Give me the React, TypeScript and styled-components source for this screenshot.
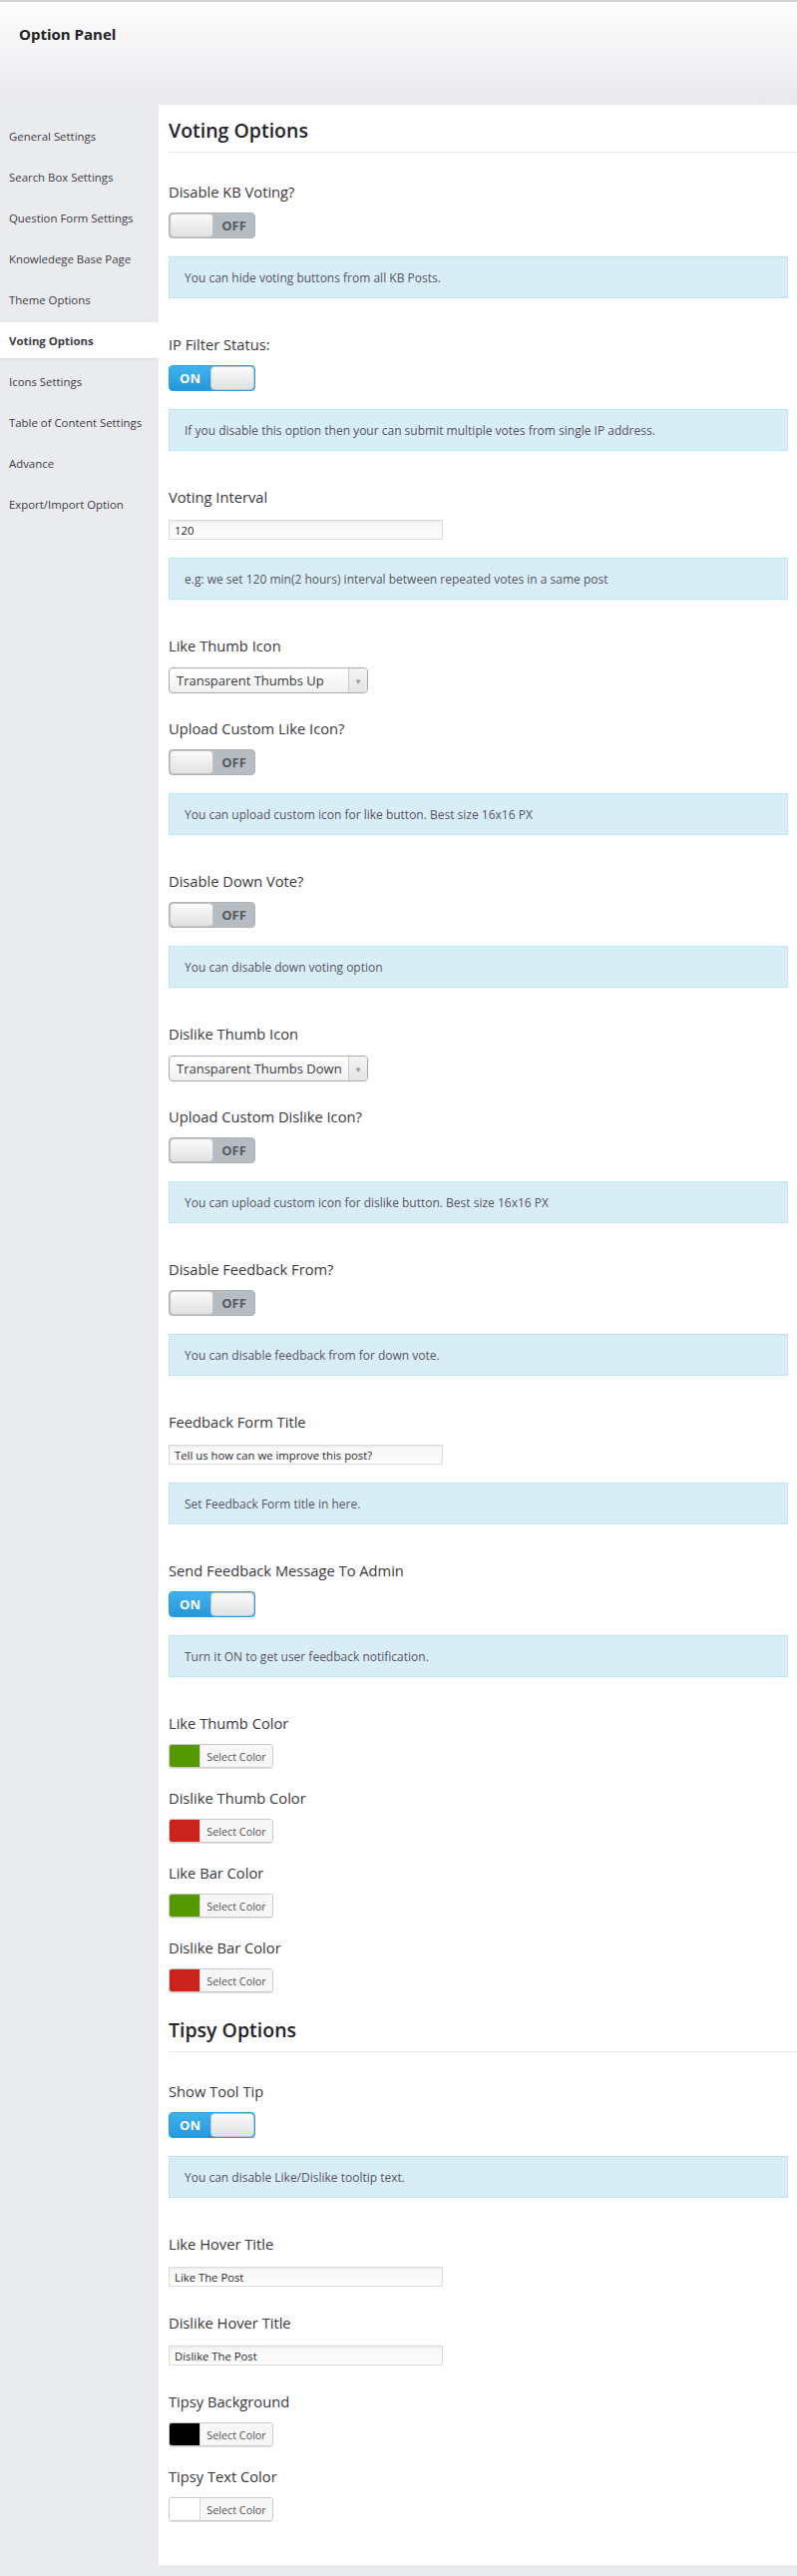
import React from "react";
import styled, { createGlobalStyle } from "styled-components";

const Global = createGlobalStyle`
  html, body { margin: 0; padding: 0; }
  body {
    background: #e9ebef;
    font-family: "Open Sans", "Noto Sans", Arial, sans-serif;
    color: #333;
  }
  * { box-sizing: border-box; }
`;

const Page = styled.div`
  min-height: 2582px;
  border-top: 2px solid #d3d3d3;
  padding-bottom: 11px;
`;

const Header = styled.header`
  height: 103px;
  padding: 22px 19px 0;
  background: linear-gradient(#fefefe, #e8e9ed);
`;

const Title = styled.h1`
  margin: 0;
  font-size: 15px;
  line-height: 20px;
  font-weight: 700;
  color: #222;
`;

const Body = styled.div`
  display: flex;
  align-items: flex-start;
`;

const Sidebar = styled.nav`
  width: 159px;
  flex: none;
  padding-top: 13px;
  display: flex;
  flex-direction: column;
  gap: 5px;
`;

const NavItem = styled.div<{ $active?: boolean }>`
  height: 36px;
  display: flex;
  align-items: center;
  padding-left: 9px;
  font-size: 11.4px;
  color: #3d3b44;
  font-weight: ${(p) => (p.$active ? 700 : 400)};
  background: ${(p) => (p.$active ? "#fff" : "transparent")};
  box-shadow: ${(p) => (p.$active ? "0 1px 3px rgba(0,0,0,0.08)" : "none")};
`;

const Main = styled.main`
  flex: 1;
  background: #fff;
  padding: 13px 0 24px 10px;
`;

const SectionTitle = styled.h2<{ $first?: boolean }>`
  margin: ${(p) => (p.$first ? "0" : "25px")} 0 29px;
  padding-bottom: 8px;
  border-bottom: 1px solid #e7e7e7;
  font-size: 19.5px;
  line-height: 26px;
  font-weight: 600;
  color: #23222a;
`;

const Field = styled.div<{ $mb: number }>`
  display: flex;
  flex-direction: column;
  align-items: flex-start;
  padding-right: 9px;
  margin-bottom: ${(p) => p.$mb}px;
`;

const Label = styled.div`
  font-size: 14.7px;
  line-height: 20px;
  color: #3a3940;
  margin-bottom: 11px;
`;

const ToggleBox = styled.div<{ $on: boolean }>`
  width: 87px;
  height: 26px;
  display: flex;
  flex-direction: ${(p) => (p.$on ? "row" : "row-reverse")};
  border-radius: 4px;
  overflow: hidden;
  border: 1px solid ${(p) => (p.$on ? "#2c9cdc" : "#aeb3b8")};
  background: ${(p) =>
    p.$on ? "linear-gradient(#3fb3f0, #2597db)" : "#b7bcc1"};
`;

const ToggleText = styled.span<{ $on: boolean }>`
  flex: 1;
  display: flex;
  align-items: center;
  justify-content: center;
  font-size: 13px;
  font-weight: 700;
  color: ${(p) => (p.$on ? "#fff" : "#555a60")};
`;

const Knob = styled.span`
  width: 44px;
  border: 1px solid #c4c4c4;
  border-radius: 4px;
  background: linear-gradient(#fbfbfb, #e1e1e1);
`;

const Info = styled.div`
  align-self: stretch;
  height: 42px;
  margin-top: 18px;
  padding: 0 15px;
  display: flex;
  align-items: center;
  background: #d9edf7;
  border: 1px solid #bce8f1;
  font-size: 12px;
  color: #555560;
`;

const TextInput = styled.div`
  width: 275px;
  height: 20px;
  margin-top: 2px;
  padding: 0 5px;
  display: flex;
  align-items: center;
  border: 1px solid #dcdcdc;
  background: linear-gradient(#f6f6f6, #fdfdfd);
  box-shadow: inset 0 1px 2px rgba(0, 0, 0, 0.06);
  font-size: 11.3px;
  color: #2b2a33;
`;

const SelectBox = styled.div`
  width: 200px;
  height: 26px;
  margin-top: 1px;
  display: flex;
  border: 1px solid #aaa;
  border-radius: 4px;
  overflow: hidden;
  background: linear-gradient(#fff, #f1f1f1);
`;

const SelectValue = styled.span`
  flex: 1;
  display: flex;
  align-items: center;
  padding-left: 7px;
  font-size: 13px;
  color: #3a3940;
`;

const SelectArrow = styled.span`
  width: 19px;
  display: flex;
  align-items: center;
  justify-content: center;
  border-left: 1px solid #ccc;
  background: linear-gradient(#f4f4f4, #e4e4e4);
  color: #999;
  font-size: 8px;
`;

const ColorButton = styled.div`
  width: 105px;
  height: 24px;
  display: flex;
  border: 1px solid #c9c9c9;
  border-radius: 3px;
  overflow: hidden;
  box-shadow: 0 1px 0 #e2e2e2;
`;

const Swatch = styled.span<{ $color: string }>`
  width: 31px;
  background: ${(p) => p.$color};
  border-right: 1px solid #d6d6d6;
`;

const SwatchLabel = styled.span`
  flex: 1;
  display: flex;
  align-items: center;
  justify-content: center;
  background: #f7f7f7;
  font-size: 10.8px;
  color: #555;
`;

const Toggle = ({ on }: { on: boolean }) => (
  <ToggleBox $on={on}>
    <ToggleText $on={on}>{on ? "ON" : "OFF"}</ToggleText>
    <Knob />
  </ToggleBox>
);

const ToggleField = ({ label, on, info }: { label: string; on: boolean; info: string }) => (
  <Field $mb={36}>
    <Label>{label}</Label>
    <Toggle on={on} />
    <Info>{info}</Info>
  </Field>
);

const InputField = ({ label, value, info }: { label: string; value: string; info?: string }) => (
  <Field $mb={info ? 36 : 26}>
    <Label>{label}</Label>
    <TextInput>{value}</TextInput>
    {info && <Info>{info}</Info>}
  </Field>
);

const SelectField = ({ label, value }: { label: string; value: string }) => (
  <Field $mb={25}>
    <Label>{label}</Label>
    <SelectBox>
      <SelectValue>{value}</SelectValue>
      <SelectArrow>▼</SelectArrow>
    </SelectBox>
  </Field>
);

const ColorField = ({ label, color }: { label: string; color: string }) => (
  <Field $mb={20}>
    <Label>{label}</Label>
    <ColorButton>
      <Swatch $color={color} />
      <SwatchLabel>Select Color</SwatchLabel>
    </ColorButton>
  </Field>
);

const navItems = [
  "General Settings",
  "Search Box Settings",
  "Question Form Settings",
  "Knowledege Base Page",
  "Theme Options",
  "Voting Options",
  "Icons Settings",
  "Table of Content Settings",
  "Advance",
  "Export/Import Option",
];

export default function App() {
  return (
    <Page>
      <Global />
      <Header>
        <Title>Option Panel</Title>
      </Header>
      <Body>
        <Sidebar>
          {navItems.map((n) => (
            <NavItem key={n} $active={n === "Voting Options"}>
              {n}
            </NavItem>
          ))}
        </Sidebar>
        <Main>
          <SectionTitle $first>Voting Options</SectionTitle>
          <ToggleField label="Disable KB Voting?" on={false} info="You can hide voting buttons from all KB Posts." />
          <ToggleField
            label="IP Filter Status:"
            on={true}
            info="If you disable this option then your can submit multiple votes from single IP address."
          />
          <InputField
            label="Voting Interval"
            value="120"
            info="e.g: we set 120 min(2 hours) interval between repeated votes in a same post"
          />
          <SelectField label="Like Thumb Icon" value="Transparent Thumbs Up" />
          <ToggleField
            label="Upload Custom Like Icon?"
            on={false}
            info="You can upload custom icon for like button. Best size 16x16 PX"
          />
          <ToggleField label="Disable Down Vote?" on={false} info="You can disable down voting option" />
          <SelectField label="Dislike Thumb Icon" value="Transparent Thumbs Down" />
          <ToggleField
            label="Upload Custom Dislike Icon?"
            on={false}
            info="You can upload custom icon for dislike button. Best size 16x16 PX"
          />
          <ToggleField label="Disable Feedback From?" on={false} info="You can disable feedback from for down vote." />
          <InputField
            label="Feedback Form Title"
            value="Tell us how can we improve this post?"
            info="Set Feedback Form title in here."
          />
          <ToggleField
            label="Send Feedback Message To Admin"
            on={true}
            info="Turn it ON to get user feedback notification."
          />
          <ColorField label="Like Thumb Color" color="#559800" />
          <ColorField label="Dislike Thumb Color" color="#c9231b" />
          <ColorField label="Like Bar Color" color="#559800" />
          <ColorField label="Dislike Bar Color" color="#c9231b" />

          <SectionTitle>Tipsy Options</SectionTitle>
          <ToggleField label="Show Tool Tip" on={true} info="You can disable Like/Dislike tooltip text." />
          <InputField label="Like Hover Title" value="Like The Post" />
          <InputField label="Dislike Hover Title" value="Dislike The Post" />
          <ColorField label="Tipsy Background" color="#000000" />
          <ColorField label="Tipsy Text Color" color="#ffffff" />
        </Main>
      </Body>
    </Page>
  );
}
